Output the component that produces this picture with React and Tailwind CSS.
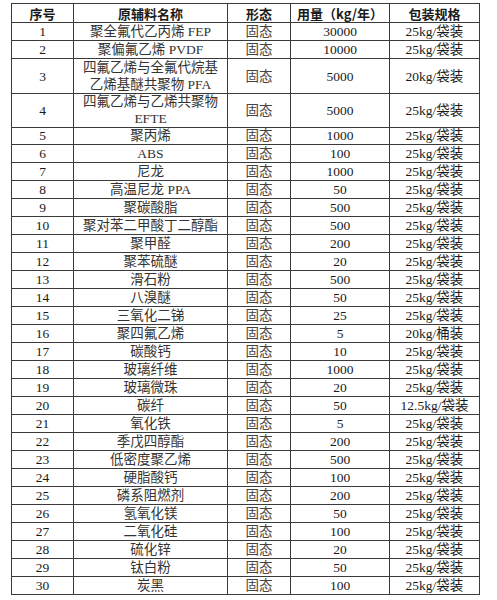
const rows = [
    ['1', ['聚全氟代乙丙烯 FEP'], '30000', '25kg/袋装'],
    ['2', ['聚偏氟乙烯 PVDF'], '10000', '25kg/袋装'],
    ['3', ['四氟乙烯与全氟代烷基', '乙烯基醚共聚物 PFA'], '5000', '20kg/袋装'],
    ['4', ['四氟乙烯与乙烯共聚物', 'EFTE'], '5000', '25kg/袋装'],
    ['5', ['聚丙烯'], '1000', '25kg/袋装'],
    ['6', ['ABS'], '100', '25kg/袋装'],
    ['7', ['尼龙'], '1000', '25kg/袋装'],
    ['8', ['高温尼龙 PPA'], '50', '25kg/袋装'],
    ['9', ['聚碳酸脂'], '500', '25kg/袋装'],
    ['10', ['聚对苯二甲酸丁二醇酯'], '500', '25kg/袋装'],
    ['11', ['聚甲醛'], '200', '25kg/袋装'],
    ['12', ['聚苯硫醚'], '20', '25kg/袋装'],
    ['13', ['滑石粉'], '500', '25kg/袋装'],
    ['14', ['八溴醚'], '50', '25kg/袋装'],
    ['15', ['三氧化二锑'], '25', '25kg/袋装'],
    ['16', ['聚四氟乙烯'], '5', '20kg/桶装'],
    ['17', ['碳酸钙'], '10', '25kg/袋装'],
    ['18', ['玻璃纤维'], '1000', '25kg/袋装'],
    ['19', ['玻璃微珠'], '20', '25kg/袋装'],
    ['20', ['碳纤'], '50', '12.5kg/袋装'],
    ['21', ['氧化铁'], '5', '25kg/袋装'],
    ['22', ['季戊四醇酯'], '200', '25kg/袋装'],
    ['23', ['低密度聚乙烯'], '500', '25kg/袋装'],
    ['24', ['硬脂酸钙'], '100', '25kg/袋装'],
    ['25', ['磷系阻燃剂'], '200', '25kg/袋装'],
    ['26', ['氢氧化镁'], '50', '25kg/袋装'],
    ['27', ['二氧化硅'], '100', '25kg/袋装'],
    ['28', ['硫化锌'], '20', '25kg/袋装'],
    ['29', ['钛白粉'], '50', '25kg/袋装'],
    ['30', ['炭黑'], '100', '25kg/袋装'],
];

const cols = 'grid grid-cols-[62px_154px_63px_99px_90px]';
const cell = 'flex flex-col items-center justify-center border-r border-b border-[#3a3a3a] leading-[17px]';

export default function App() {
    return (
        <div className="min-h-[600px] bg-white pt-[3px] pl-[11px] text-[13.5px] text-[#1a1a1a] font-['Liberation_Serif','Noto_Sans_CJK_SC',serif]">
            <div className="w-[469px] border-l border-t border-[#3a3a3a]">
                <div className={`${cols} h-[19px] font-bold font-['Noto_Sans_CJK_SC',sans-serif] text-[13px]`}>
                    <div className={cell}>序号</div>
                    <div className={cell}>原辅料名称</div>
                    <div className={cell}>形态</div>
                    <div className={cell}>用量（kg/年）</div>
                    <div className={cell}>包装规格</div>
                </div>
                {rows.map(([no, name, qty, pack]) => (
                    <div key={no} className={`${cols} ${name.length > 1 ? 'h-[34px]' : 'h-[18px]'}`}>
                        <div className={cell}>{no}</div>
                        <div className={`${cell} text-[#333]`}>
                            {name.map((line) => (
                                <span key={line}>{line}</span>
                            ))}
                        </div>
                        <div className={`${cell} text-[#444]`}>固态</div>
                        <div className={cell}>{qty}</div>
                        <div className={cell}>{pack}</div>
                    </div>
                ))}
            </div>
        </div>
    );
}
